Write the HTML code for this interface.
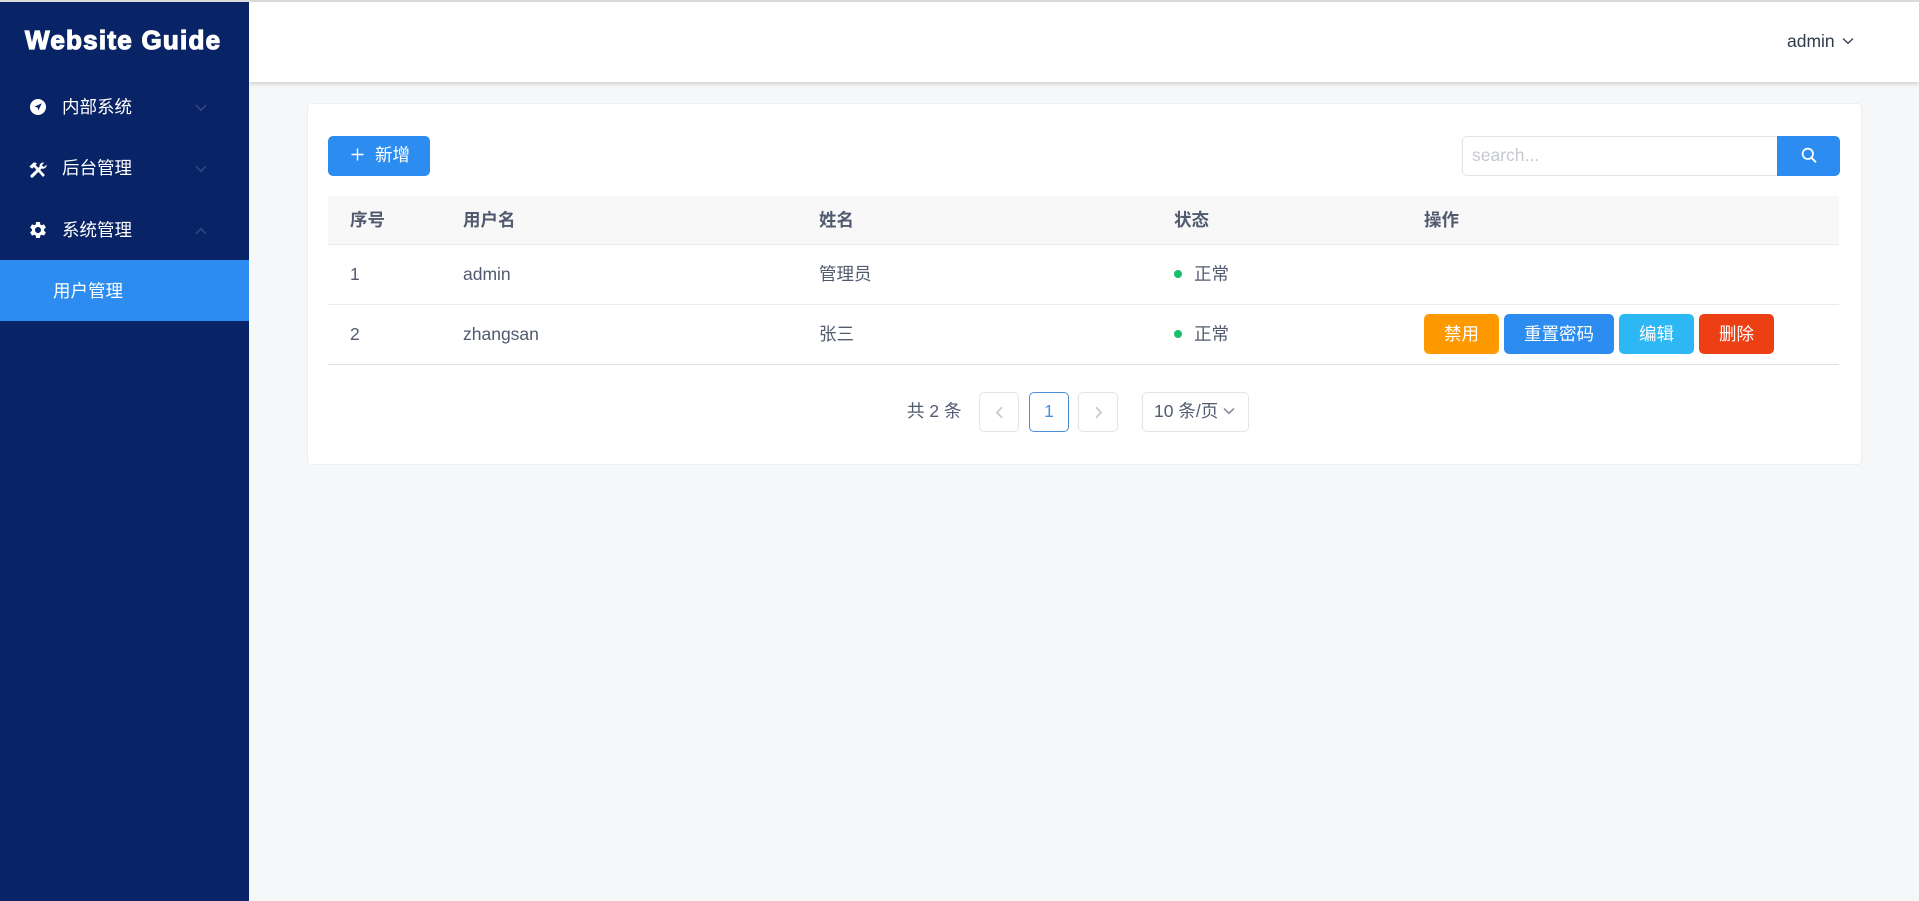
<!DOCTYPE html>
<html lang="zh">
<head>
<meta charset="utf-8">
<title>Website Guide</title>
<style>
html,body{margin:0;padding:0;width:1919px;height:901px;overflow:hidden;background:#f5f7f9;}
body{position:relative;font-family:"Liberation Sans","Noto Sans CJK SC",sans-serif;color:#515a6e;font-size:17.5px;}
.a{position:absolute;box-sizing:border-box;}
.t{position:absolute;white-space:nowrap;line-height:30px;height:30px;}
.btn{position:absolute;box-sizing:border-box;height:40px;top:314px;border-radius:5px;color:#fff;text-align:center;line-height:40px;font-size:17.5px;}
svg{position:absolute;display:block;}
.m{color:#fff;}
.th{font-weight:700;color:#515a6e;top:205px;}
.pg{position:absolute;box-sizing:border-box;top:392px;height:40px;width:40px;border:1px solid #e2e4e8;border-radius:5px;background:#fff;}
</style>
</head>
<body>
<div class="a" style="left:0;top:0;width:1919px;height:2px;background:#dcdcdc;"></div>

<!-- header -->
<div class="a" style="left:249px;top:2px;width:1670px;height:80px;background:#fff;box-shadow:0 2px 4px rgba(0,0,0,.16);"></div>
<div class="t" style="left:1787px;top:26px;color:#2f3b4c;">admin</div>
<svg style="left:1842px;top:37px" width="12" height="8" viewBox="0 0 12 8"><path d="M1 1.5L6 6.3 11 1.5" fill="none" stroke="#3a4452" stroke-width="1.4"/></svg>

<!-- sidebar -->
<div class="a" style="left:0;top:2px;width:249px;height:899px;background:#082366;"></div>
<div class="t" style="left:25px;top:25px;color:#fff;font-weight:700;font-size:26px;letter-spacing:1.25px;-webkit-text-stroke:1.2px #fff;">Website Guide</div>

<svg style="left:30px;top:99px" width="16" height="16" viewBox="0 0 16 16"><circle cx="8" cy="8" r="8" fill="#fff"/><path d="M11.8 4.2L4.6 7.6 7.5 8.5 8.4 11.4z" fill="#082366"/></svg>
<div class="t m" style="left:62px;top:92px;">内部系统</div>
<svg style="left:195px;top:104px" width="12" height="8" viewBox="0 0 12 8"><path d="M.8 1L6 6.3 11.2 1" fill="none" stroke="#35497f" stroke-width="1.5"/></svg>

<svg style="left:29px;top:162px" width="18" height="16" viewBox="0 0 18 16"><path d="M.4 4.6L4.8.2 8 1.2 6.6 3 15.9 13 14 15 4.9 5 3.2 6.6z" fill="#fff"/><path d="M17.4 2.6L15 5 12.8 3.2 15.2.7C12.9.1 10.2 1.6 10.6 4.6L2.2 12.6C1 13.8 1.3 14.6 1.9 15.2 2.5 15.8 3.4 16 4.4 15L12.6 6.6C15.6 7.2 18.2 5 17.4 2.6z" fill="#fff"/></svg>
<div class="t m" style="left:62px;top:153px;">后台管理</div>
<svg style="left:195px;top:165px" width="12" height="8" viewBox="0 0 12 8"><path d="M.8 1L6 6.3 11.2 1" fill="none" stroke="#35497f" stroke-width="1.5"/></svg>

<svg style="left:28px;top:220px" width="20" height="20" viewBox="0 0 24 24"><path fill="#fff" d="M19.14 12.94c.04-.3.06-.61.06-.94 0-.32-.02-.64-.07-.94l2.03-1.58c.18-.14.23-.41.12-.61l-1.92-3.32c-.12-.22-.37-.29-.59-.22l-2.39.96c-.5-.38-1.03-.7-1.62-.94l-.36-2.54c-.04-.24-.24-.41-.48-.41h-3.84c-.24 0-.43.17-.47.41l-.36 2.54c-.59.24-1.13.57-1.62.94l-2.39-.96c-.22-.08-.47 0-.59.22L2.74 8.87c-.12.21-.08.47.12.61l2.03 1.58c-.05.3-.09.63-.09.94s.02.64.07.94l-2.03 1.58c-.18.14-.23.41-.12.61l1.92 3.32c.12.22.37.29.59.22l2.39-.96c.5.38 1.03.7 1.62.94l.36 2.54c.05.24.24.41.48.41h3.84c.24 0 .44-.17.47-.41l.36-2.54c.59-.24 1.13-.56 1.62-.94l2.39.96c.22.08.47 0 .59-.22l1.92-3.32c.12-.22.07-.47-.12-.61l-2.01-1.58zM12 15.6c-1.98 0-3.6-1.62-3.6-3.6s1.62-3.6 3.6-3.6 3.6 1.62 3.6 3.6-1.62 3.6-3.6 3.6z"/></svg>
<div class="t m" style="left:62px;top:215px;">系统管理</div>
<svg style="left:195px;top:227px" width="12" height="8" viewBox="0 0 12 8"><path d="M.8 7L6 1.7 11.2 7" fill="none" stroke="#35497f" stroke-width="1.5"/></svg>

<div class="a" style="left:0;top:260px;width:249px;height:61px;background:#2d8cf0;"></div>
<div class="t m" style="left:53px;top:276px;">用户管理</div>

<!-- card -->
<div class="a" style="left:307px;top:103px;width:1555px;height:362px;background:#fff;border:1px solid #eceef0;border-radius:4px;"></div>

<!-- add button -->
<div class="a" style="left:328px;top:136px;width:102px;height:40px;background:#2d8cf0;border-radius:5px;"></div>
<svg style="left:351px;top:148px" width="13" height="13" viewBox="0 0 13 13"><path d="M6.5 .5v12M.5 6.5h12" stroke="#fff" stroke-width="1.4" fill="none"/></svg>
<div class="t m" style="left:375px;top:140px;">新增</div>

<!-- search -->
<div class="a" style="left:1462px;top:136px;width:316px;height:40px;background:#fff;border:1px solid #e0e2e6;border-radius:5px 0 0 5px;"></div>
<div class="t" style="left:1472px;top:140px;color:#c5c8ce;">search...</div>
<div class="a" style="left:1777px;top:136px;width:63px;height:40px;background:#2d8cf0;border-radius:0 5px 5px 0;"></div>
<svg style="left:1801px;top:147px" width="16" height="17" viewBox="0 0 16 17"><circle cx="6.8" cy="6.8" r="5.2" fill="none" stroke="#fff" stroke-width="1.7"/><path d="M10.6 10.8L15 15.4" stroke="#fff" stroke-width="1.9" fill="none"/></svg>

<!-- table -->
<div class="a" style="left:328px;top:196px;width:1511px;height:48px;background:#f8f8f9;"></div>
<div class="a" style="left:328px;top:244px;width:1511px;height:1px;background:#e8eaec;"></div>
<div class="a" style="left:328px;top:304px;width:1511px;height:1px;background:#e8eaec;"></div>
<div class="a" style="left:328px;top:364px;width:1511px;height:1px;background:#dcdee2;"></div>

<div class="t th" style="left:350px;">序号</div>
<div class="t th" style="left:463px;">用户名</div>
<div class="t th" style="left:819px;">姓名</div>
<div class="t th" style="left:1174px;">状态</div>
<div class="t th" style="left:1424px;">操作</div>

<div class="t" style="left:350px;top:259px;">1</div>
<div class="t" style="left:463px;top:259px;">admin</div>
<div class="t" style="left:819px;top:259px;">管理员</div>
<div class="a" style="left:1174px;top:270px;width:8px;height:8px;border-radius:50%;background:#19be6b;"></div>
<div class="t" style="left:1194px;top:259px;">正常</div>

<div class="t" style="left:350px;top:319px;">2</div>
<div class="t" style="left:463px;top:319px;">zhangsan</div>
<div class="t" style="left:819px;top:319px;">张三</div>
<div class="a" style="left:1174px;top:330px;width:8px;height:8px;border-radius:50%;background:#19be6b;"></div>
<div class="t" style="left:1194px;top:319px;">正常</div>

<div class="btn" style="left:1424px;width:75px;background:#f90;">禁用</div>
<div class="btn" style="left:1504px;width:110px;background:#2d8cf0;">重置密码</div>
<div class="btn" style="left:1619px;width:75px;background:#2db7f5;">编辑</div>
<div class="btn" style="left:1699px;width:75px;background:#ed3f14;">删除</div>

<!-- pagination -->
<div class="t" style="left:907px;top:396px;color:#515a6e;">共 2 条</div>
<div class="pg" style="left:979px;"></div>
<svg style="left:995px;top:406px" width="9" height="13" viewBox="0 0 9 13"><path d="M7 1.2L2 6.5 7 11.8" fill="none" stroke="#c5c8ce" stroke-width="1.7"/></svg>
<div class="pg" style="left:1029px;border-color:#4a8fdc;color:#4a8fdc;text-align:center;line-height:37px;">1</div>
<div class="pg" style="left:1078px;"></div>
<svg style="left:1094px;top:406px" width="9" height="13" viewBox="0 0 9 13"><path d="M2 1.2L7 6.5 2 11.8" fill="none" stroke="#c5c8ce" stroke-width="1.7"/></svg>
<div class="pg" style="left:1142px;width:107px;"></div>
<div class="t" style="left:1154px;top:396px;">10 条/页</div>
<svg style="left:1223px;top:407px" width="12" height="8" viewBox="0 0 12 8"><path d="M1 1.5L6 6.3 11 1.5" fill="none" stroke="#808695" stroke-width="1.5"/></svg>
</body>
</html>
